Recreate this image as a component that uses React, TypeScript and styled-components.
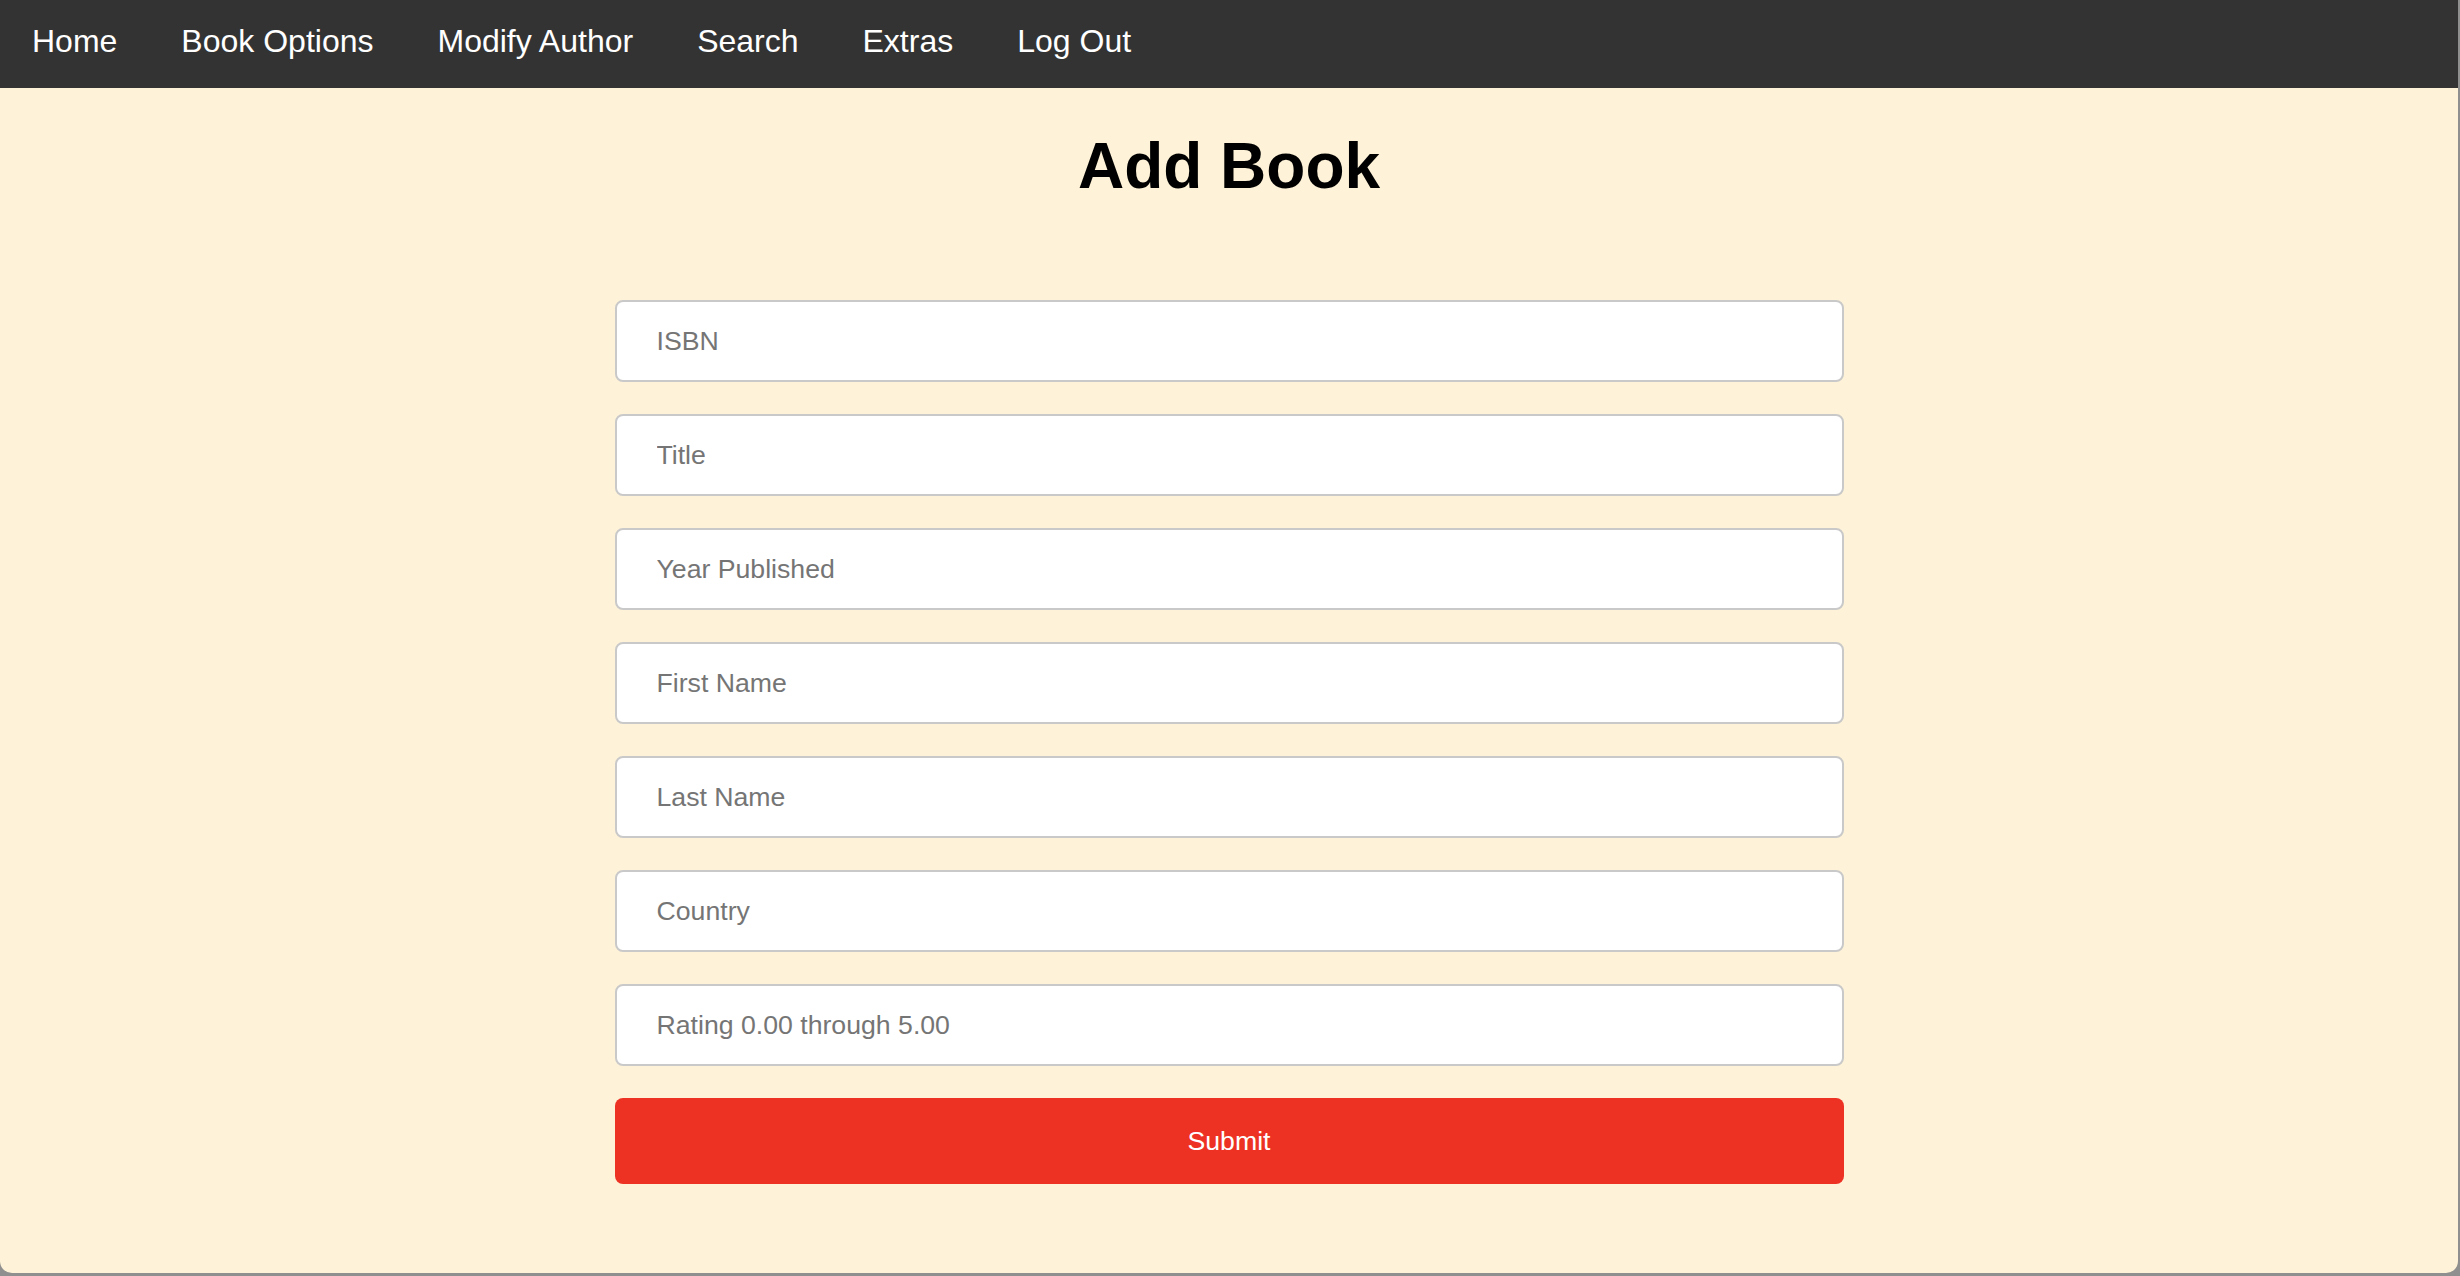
import React from "react";
import styled, { createGlobalStyle } from "styled-components";

const GlobalStyle = createGlobalStyle`
  html, body {
    margin: 0;
    padding: 0;
    background: #8f8f8f;
  }
  body {
    font-family: "Liberation Sans", Arial, sans-serif;
  }
  * { box-sizing: border-box; }
`;

const Window = styled.div`
  width: 2458px;
  height: 1273px;
  background: #fef3d8;
  border-bottom-left-radius: 12px;
  border-bottom-right-radius: 12px;
  overflow: hidden;
  display: flex;
  flex-direction: column;
`;

const NavBar = styled.nav`
  height: 88px;
  background: #333333;
  display: flex;
  align-items: flex-start;
  flex-shrink: 0;
`;

const NavLink = styled.a`
  display: block;
  color: #ffffff;
  text-decoration: none;
  font-family: "Liberation Sans", Arial, sans-serif;
  font-size: 32px;
  line-height: 36px;
  padding: 23px 32px 29px;
  cursor: pointer;
`;

const Main = styled.main`
  display: flex;
  flex-direction: column;
  align-items: center;
`;

const Title = styled.h1`
  margin: 41px 0 0;
  font-family: "Liberation Sans", Arial, sans-serif;
  font-weight: 700;
  font-size: 64px;
  line-height: 74px;
  color: #000;
`;

const Form = styled.form`
  width: 50%;
  margin-top: 97px;
  display: flex;
  flex-direction: column;
  gap: 32px;
`;

const Field = styled.input`
  width: 100%;
  height: 82px;
  border: 2px solid #c9c9c9;
  border-radius: 8px;
  background: #ffffff;
  padding: 0 40px;
  font-family: "Liberation Sans", Arial, sans-serif;
  font-size: 26.67px;
  color: #333;
  outline: none;
  &::placeholder {
    color: #757575;
  }
`;

const SubmitButton = styled.button`
  width: 100%;
  height: 86px;
  border: none;
  border-radius: 8px;
  background: #ed3224;
  color: #ffffff;
  font-family: "Liberation Sans", Arial, sans-serif;
  font-size: 26.67px;
  cursor: pointer;
`;

const links = ["Home", "Book Options", "Modify Author", "Search", "Extras", "Log Out"];
const fields = [
  "ISBN",
  "Title",
  "Year Published",
  "First Name",
  "Last Name",
  "Country",
  "Rating 0.00 through 5.00",
];

export default function App() {
  return (
    <>
      <GlobalStyle />
      <Window>
        <NavBar>
          {links.map((l) => (
            <NavLink key={l}>{l}</NavLink>
          ))}
        </NavBar>
        <Main>
          <Title>Add Book</Title>
          <Form onSubmit={(e) => e.preventDefault()}>
            {fields.map((f) => (
              <Field key={f} type="text" placeholder={f} />
            ))}
            <SubmitButton type="submit">Submit</SubmitButton>
          </Form>
        </Main>
      </Window>
    </>
  );
}
